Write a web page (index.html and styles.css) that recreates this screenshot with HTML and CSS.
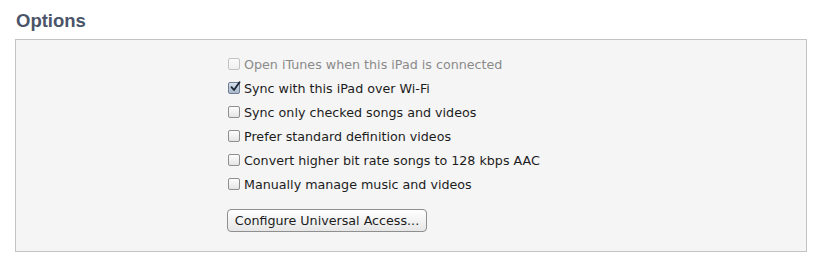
FILE: index.html
```html
<!DOCTYPE html>
<html lang="en">
<head>
    <meta charset="UTF-8">
    <title>Options</title>
    <link rel="stylesheet" href="styles.css">
</head>
<body>
    <h2 class="section-title">Options</h2>
    <div class="options-box">
        <div class="option-list">
            <label class="option disabled">
                <span class="checkbox"></span>
                <span>Open iTunes when this iPad is connected</span>
            </label>
            <label class="option">
                <span class="checkbox checked">
                    <svg width="12" height="12" viewBox="0 0 12 12"><path d="M2.5 6.2 L5 9 L10.5 1.2" fill="none" stroke="#1b2433" stroke-width="1.8" stroke-linecap="round" stroke-linejoin="round"/></svg>
                </span>
                <span>Sync with this iPad over Wi-Fi</span>
            </label>
            <label class="option">
                <span class="checkbox"></span>
                <span>Sync only checked songs and videos</span>
            </label>
            <label class="option">
                <span class="checkbox"></span>
                <span>Prefer standard definition videos</span>
            </label>
            <label class="option">
                <span class="checkbox"></span>
                <span>Convert higher bit rate songs to 128 kbps AAC</span>
            </label>
            <label class="option">
                <span class="checkbox"></span>
                <span>Manually manage music and videos</span>
            </label>
            <button class="push-button">Configure Universal Access...</button>
        </div>
    </div>
</body>
</html>
```

FILE: styles.css
```css
body {
    margin: 0;
    background: #ffffff;
    font-family: 'DejaVu Sans', 'Liberation Sans', sans-serif;
    color: #1c1c1c;
}

.section-title {
    margin: 0;
    padding: 11px 0 0 16px;
    height: 39px;
    box-sizing: border-box;
    font-family: 'Liberation Sans', Arial, sans-serif;
    font-size: 18.5px;
    line-height: 20px;
    font-weight: bold;
    color: #4b5468;
}

.options-box {
    margin-left: 15px;
    width: 792px;
    height: 213px;
    box-sizing: border-box;
    border: 1px solid #c3c3c3;
    background: #f5f5f5;
}

.option-list {
    display: flex;
    flex-direction: column;
    align-items: flex-start;
    padding: 12px 0 0 212px;
}

.option {
    display: flex;
    align-items: center;
    gap: 4px;
    height: 24px;
    font-size: 12.7px;
}

.option.disabled {
    color: #8a8a8a;
}

.checkbox {
    width: 12px;
    height: 12px;
    box-sizing: border-box;
    border: 1px solid #8e8e8e;
    border-radius: 2px;
    background: linear-gradient(#fdfdfd, #e4e4e4);
    position: relative;
}

.option.disabled .checkbox {
    border-color: #c2c2c2;
    background: linear-gradient(#fafafa, #efefef);
}

.checkbox.checked {
    background: linear-gradient(#d6dfea, #a9b8cc);
    border-color: #6f7e93;
}

.checkbox svg {
    position: absolute;
    left: 0;
    top: -2px;
}

.push-button {
    margin-top: 13px;
    margin-left: -1px;
    width: 200px;
    height: 23px;
    border: 1px solid #8f8f8f;
    border-radius: 4px;
    background: linear-gradient(#ffffff, #e6e6e6);
    font-family: 'DejaVu Sans', 'Liberation Sans', sans-serif;
    font-size: 12.7px;
    color: #1c1c1c;
    padding: 0;
}
```
